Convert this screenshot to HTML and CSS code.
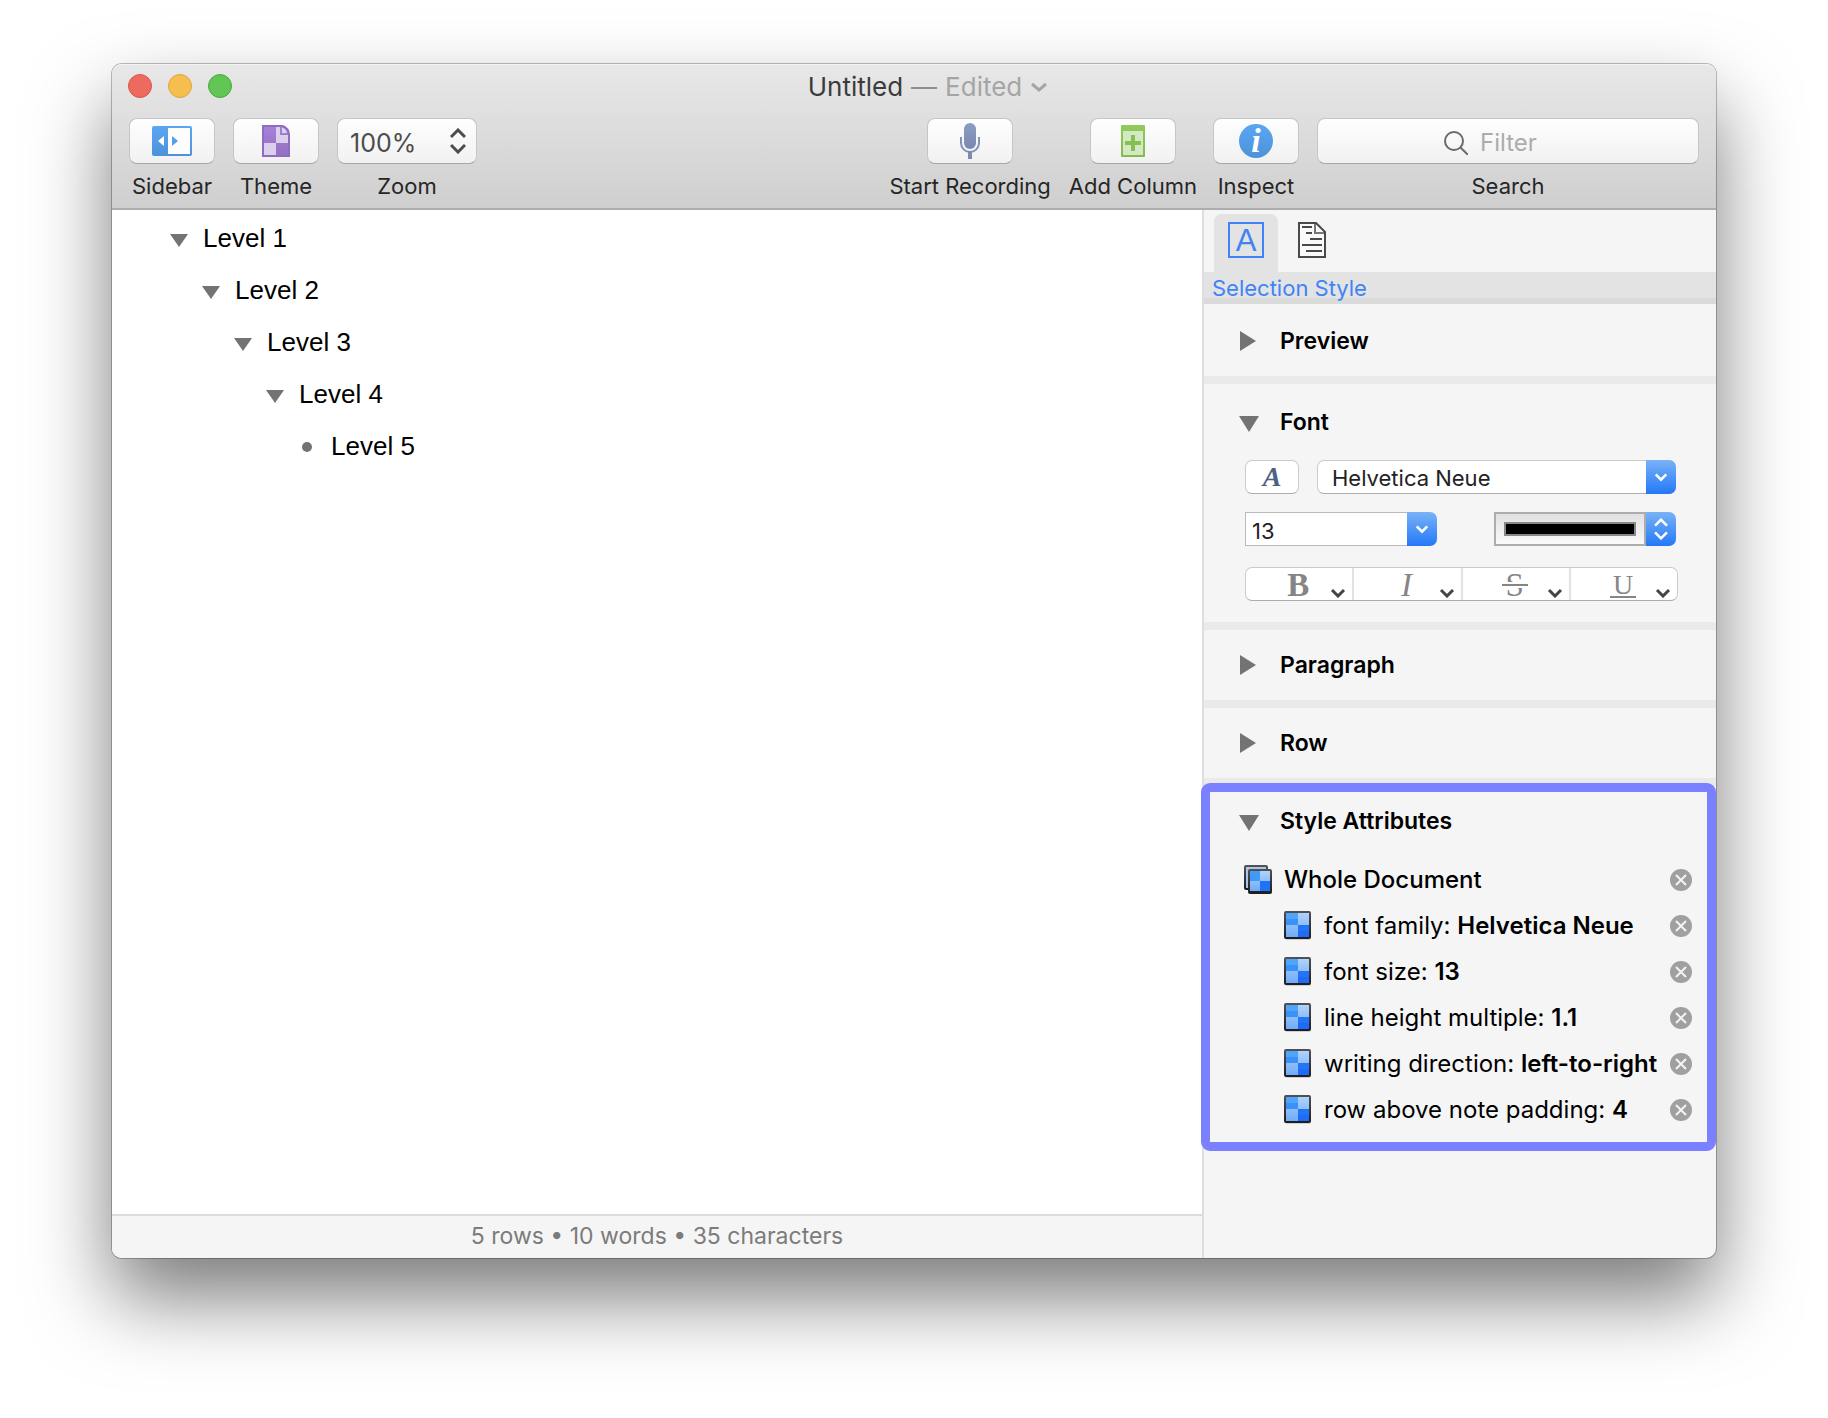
FILE: index.html
```html
<!DOCTYPE html>
<html lang="en">
<head>
<meta charset="utf-8">
<title>Untitled</title>
<link rel="stylesheet" href="styles.css">
</head>
<body>
<svg class="defs" width="0" height="0" aria-hidden="true">
  <defs>
    <linearGradient id="blue" x1="0" y1="0" x2="0" y2="1"><stop offset="0" stop-color="#5ba6f2"/><stop offset="1" stop-color="#4d92da"/></linearGradient>
    <linearGradient id="purple" x1="0" y1="0" x2="0" y2="1"><stop offset="0" stop-color="#a682d8"/><stop offset="1" stop-color="#9370c4"/></linearGradient>
    <linearGradient id="slate" x1="0" y1="0" x2="0" y2="1"><stop offset="0" stop-color="#8b9cc4"/><stop offset="1" stop-color="#7b88b0"/></linearGradient>
    <linearGradient id="green" x1="0" y1="0" x2="0" y2="1"><stop offset="0" stop-color="#90cb5b"/><stop offset="1" stop-color="#83b951"/></linearGradient>
    <linearGradient id="frame" x1="0" y1="0" x2="0" y2="1"><stop offset="0" stop-color="#505256"/><stop offset="1" stop-color="#1c1d20"/></linearGradient>
    <linearGradient id="pale" x1="0" y1="0" x2="0" y2="1"><stop offset="0" stop-color="#b0d2fb"/><stop offset="1" stop-color="#6fabf8"/></linearGradient>
    <symbol id="down" viewBox="0 0 20 20"><path d="M0 4h20L10 20z" fill="#737373"/></symbol>
    <symbol id="down-small" viewBox="0 0 18 18"><path d="M0 5h18L9 18z" fill="#737373"/></symbol>
    <symbol id="right" viewBox="0 0 20 20"><path d="M1 0v20l16-10z" fill="#737373"/></symbol>
    <symbol id="chevron" viewBox="0 0 16 10"><path d="M2 2l6 6 6-6" fill="none" stroke="currentColor" stroke-width="3"/></symbol>
    <symbol id="updown" viewBox="0 0 16 26"><path d="M1 9l7-7 7 7M1 17l7 7 7-7" fill="none" stroke="currentColor" stroke-width="3"/></symbol>
    <symbol id="attr" viewBox="0 0 28 30">
      <rect x="1" y="2" width="26" height="27" rx="2" fill="#000" opacity=".15"/>
      <rect width="27" height="28" rx="2" fill="url(#frame)"/>
      <rect x="2" y="2" width="23" height="24" fill="url(#pale)"/>
      <path d="M2 2h12v12H2z" fill="#3a91f8"/><path d="M14 14h11v12H14z" fill="#2275f7"/>
      <path d="M2 2h12v6H2z" fill="#4fa5f9"/><path d="M14 20h11v6H14z" fill="#1f6bf5"/>
    </symbol>
    <symbol id="docattr" viewBox="0 0 28 30">
      <rect x="1" y="1" width="22" height="23" rx="1" fill="#a9c6ea" stroke="url(#frame)" stroke-width="2"/>
      <rect x="4" y="4" width="24" height="25" rx="2" fill="url(#frame)"/>
      <rect x="6" y="6" width="20" height="20" fill="url(#pale)"/>
      <path d="M6 6h10v10H6z" fill="#429af8"/><path d="M16 16h10v10H16z" fill="#2072f7"/>
    </symbol>
    <symbol id="clear" viewBox="0 0 22 22"><circle cx="11" cy="11" r="11" fill="#a0a0a0"/><path d="M6 6l10 10M16 6L6 16" stroke="#f4f4f4" stroke-width="2"/></symbol>
  </defs>
</svg>

<main class="window">
  <header class="titlebar">
    <div class="titlerow">
      <div class="lights">
        <button class="light red" aria-label="Close"></button>
        <button class="light yellow" aria-label="Minimize"></button>
        <button class="light green" aria-label="Zoom window"></button>
      </div>
      <h1 class="title">Untitled <span class="dash">—</span> <span class="edited">Edited</span> <svg class="title-chevron" width="18" height="10" viewBox="0 0 18 10"><path d="M2 2l7 6 7-6" fill="none" stroke="currentColor" stroke-width="3"/></svg></h1>
    </div>
    <div class="toolbar">
      <div class="tools">
        <div class="tool">
          <button class="key" id="t-sidebar" aria-label="Sidebar">
            <svg width="40" height="30" viewBox="0 0 40 30"><rect width="40" height="30" rx="2" fill="url(#blue)"/><path d="M16 2h22v26H16z" fill="#fdfdfd"/><path d="M12 10v10l-6-5z" fill="#fff"/><path d="M20 10v10l6-5z" fill="#559fe8"/></svg>
          </button>
          <label for="t-sidebar">Sidebar</label>
        </div>
        <div class="tool">
          <button class="key" id="t-theme" aria-label="Theme">
            <svg width="28" height="32" viewBox="0 0 28 32"><path d="M0 0h20q3 0 5 3t3 7v22H0z" fill="url(#purple)"/><path d="M14 2h4v8h8v8H14zM2 18h12v12H2z" fill="#dccfec"/><path d="M20 2q4 1 5 6h-5z" fill="#dccfec"/><path d="M1 1h18.500q7.500 2 7.500 9v21H1z" fill="none" stroke="#8e6cc0" stroke-width="2"/></svg>
          </button>
          <label for="t-theme">Theme</label>
        </div>
        <div class="tool">
          <div class="picker zoom">
            <select id="t-zoom"><option>100%</option><option>150%</option></select>
            <svg class="zoom-mark" width="16" height="26"><use href="#updown"/></svg>
          </div>
          <label for="t-zoom">Zoom</label>
        </div>
      </div>
      <div class="tools end">
        <div class="tool">
          <button class="key" id="t-record" aria-label="Start Recording">
            <svg width="20" height="36" viewBox="0 0 20 36"><rect x="4" width="12" height="26" rx="6" fill="url(#slate)"/><path d="M1 14v6a9 9 0 0 0 18 0v-6" fill="none" stroke="#8392bb" stroke-width="2"/><path d="M8 28h4v8H8z" fill="#7e8bb4"/></svg>
          </button>
          <label for="t-record">Start Recording</label>
        </div>
        <div class="tool">
          <button class="key" id="t-column" aria-label="Add Column">
            <svg width="24" height="32" viewBox="0 0 24 32"><rect width="24" height="32" rx="1" fill="url(#green)"/><path d="M2 6h20v24H2z" fill="#d5e8c4"/><path d="M10 10h4v6h6v4h-6v6h-4v-6H4v-4h6z" fill="#86bf53"/></svg>
          </button>
          <label for="t-column">Add Column</label>
        </div>
      </div>
      <div class="tools">
        <div class="tool">
          <button class="key" id="t-inspect" aria-label="Inspect">
            <svg class="badge" width="34" height="34" viewBox="0 0 34 34"><circle cx="17" cy="17" r="17" fill="url(#blue)"/><text class="info" x="17" y="28" text-anchor="middle">i</text></svg>
          </button>
          <label for="t-inspect">Inspect</label>
        </div>
        <div class="tool">
          <div class="searchbox">
            <svg width="24" height="24" viewBox="0 0 24 24"><circle cx="10" cy="10" r="9" fill="none" stroke="#6a6a6a" stroke-width="2"/><path d="M16 16l8 8" stroke="#6a6a6a" stroke-width="2"/></svg>
            <input id="t-search" type="text" placeholder="Filter">
          </div>
          <label for="t-search">Search</label>
        </div>
      </div>
    </div>
  </header>

  <div class="body">
    <section class="editor">
      <ul class="outline">
        <li><div class="row"><svg width="18" height="18"><use href="#down-small"/></svg>Level 1</div>
          <ul><li><div class="row"><svg width="18" height="18"><use href="#down-small"/></svg>Level 2</div>
            <ul><li><div class="row"><svg width="18" height="18"><use href="#down-small"/></svg>Level 3</div>
              <ul><li><div class="row"><svg width="18" height="18"><use href="#down-small"/></svg>Level 4</div>
                <ul><li><div class="row"><svg width="18" height="18" viewBox="0 0 18 18"><circle cx="9" cy="10" r="5" fill="#737373"/></svg>Level 5</div></li></ul>
              </li></ul>
            </li></ul>
          </li></ul>
        </li>
      </ul>
      <footer class="status">5 rows • 10 words • 35 characters</footer>
    </section>

    <aside class="inspector">
      <nav class="tabs">
        <button class="tab active" aria-label="Style"><span class="letter">A</span></button>
        <button class="tab" aria-label="Document">
          <svg width="28" height="36" viewBox="0 0 28 36"><path d="M1 1h17l9 9v25H1z" fill="#fafafa" stroke="#4a4a4a" stroke-width="2"/><path d="M17 2v9h9" fill="none" stroke="#777" stroke-width="2"/><path d="M4 5h10M8 11h6M12 17h12M4 23h20M8 29h16" stroke="#4a4a4a" stroke-width="2"/></svg>
        </button>
      </nav>
      <div class="band">Selection Style</div>

      <section class="panel first">
        <h2><button class="toggle"><svg width="20" height="20"><use href="#right"/></svg>Preview</button></h2>
      </section>

      <section class="panel font">
        <h2><button class="toggle"><svg width="20" height="20"><use href="#down"/></svg>Font</button></h2>
        <div class="controls">
          <div class="line">
            <button class="fontkey" aria-label="Show fonts">A</button>
            <div class="picker family">
              <select aria-label="Font family"><option>Helvetica Neue</option></select>
              <span class="cap over"><svg width="14" height="10"><use href="#chevron"/></svg></span>
            </div>
          </div>
          <div class="line spread">
            <div class="combo">
              <input type="text" value="13" aria-label="Font size">
              <button class="cap" aria-label="Font sizes"><svg width="14" height="10"><use href="#chevron"/></svg></button>
            </div>
            <div class="combo">
              <button class="well" aria-label="Text color"><span class="swatch"></span></button>
              <button class="cap" aria-label="Colors"><svg width="14" height="22"><use href="#updown"/></svg></button>
            </div>
          </div>
          <div class="segments">
            <button aria-label="Bold"><span class="glyph bold">B</span><svg width="16" height="10"><use href="#chevron"/></svg></button>
            <button aria-label="Italic"><span class="glyph italic">I</span><svg width="16" height="10"><use href="#chevron"/></svg></button>
            <button aria-label="Strikethrough"><span class="glyph strike">S</span><svg width="16" height="10"><use href="#chevron"/></svg></button>
            <button aria-label="Underline"><span class="glyph under">U</span><svg width="16" height="10"><use href="#chevron"/></svg></button>
          </div>
        </div>
      </section>

      <section class="panel">
        <h2><button class="toggle"><svg width="20" height="20"><use href="#right"/></svg>Paragraph</button></h2>
      </section>
      <section class="panel">
        <h2><button class="toggle"><svg width="20" height="20"><use href="#right"/></svg>Row</button></h2>
      </section>

      <section class="attributes">
        <h2><button class="toggle"><svg width="20" height="20"><use href="#down"/></svg>Style Attributes</button></h2>
        <ul class="attrs">
          <li class="whole"><svg width="28" height="30"><use href="#docattr"/></svg><span class="text">Whole Document</span><button aria-label="Clear all"><svg width="22" height="22"><use href="#clear"/></svg></button></li>
          <li><svg width="28" height="30"><use href="#attr"/></svg><span class="text">font family: <b>Helvetica Neue</b></span><button aria-label="Clear"><svg width="22" height="22"><use href="#clear"/></svg></button></li>
          <li><svg width="28" height="30"><use href="#attr"/></svg><span class="text">font size: <b>13</b></span><button aria-label="Clear"><svg width="22" height="22"><use href="#clear"/></svg></button></li>
          <li><svg width="28" height="30"><use href="#attr"/></svg><span class="text">line height multiple: <b>1.1</b></span><button aria-label="Clear"><svg width="22" height="22"><use href="#clear"/></svg></button></li>
          <li><svg width="28" height="30"><use href="#attr"/></svg><span class="text">writing direction: <b>left-to-right</b></span><button aria-label="Clear"><svg width="22" height="22"><use href="#clear"/></svg></button></li>
          <li><svg width="28" height="30"><use href="#attr"/></svg><span class="text">row above note padding: <b>4</b></span><button aria-label="Clear"><svg width="22" height="22"><use href="#clear"/></svg></button></li>
        </ul>
      </section>
    </aside>
  </div>
</main>
</body>
</html>
```

FILE: styles.css
```css
* { box-sizing: border-box; }

body {
  margin: 0;
  min-height: 100vh;
  padding: 64px 112px 160px;
  display: flex;
  flex-direction: column;
  background: #fff;
  color: #000;
  font-family: Inter, Roboto, sans-serif;
  font-size: 22px;
  line-height: 28px;
}

button, input, select {
  font: inherit;
  color: inherit;
  margin: 0;
  padding: 0;
  border: 0;
  background: none;
  outline: 0;
}

select { appearance: none; }
svg { display: block; flex: none; }
h1, h2, ul { margin: 0; padding: 0; font-size: 23px; font-weight: 400; }
ul { list-style: none; }
.defs { position: absolute; }

.window {
  flex: 1;
  display: flex;
  flex-direction: column;
  border-radius: 10px;
  background: #f5f5f5;
  box-shadow: 0 0 0 1px rgba(0, 0, 0, .25), 0 40px 80px rgba(0, 0, 0, .52);
}

/* Title bar and toolbar */
.titlebar {
  height: 146px;
  border-bottom: 2px solid #adadad;
  border-radius: 10px 10px 0 0;
  background: linear-gradient(#e8e8e8, #cfcfcf);
  box-shadow: inset 0 1px #f4f4f4;
}

.titlerow {
  display: grid;
  grid-template-columns: 1fr auto 1fr;
  height: 54px;
  padding: 10px 16px 0;
}

.lights { display: flex; gap: 16px; }
.light { width: 24px; height: 24px; border: 1px solid; border-radius: 50%; }
.red { background: #ee6a5f; border-color: #d75549; }
.yellow { background: #f6be4f; border-color: #dba53c; }
.green { background: #61c654; border-color: #4ba83e; }

.title {
  display: flex;
  align-items: center;
  gap: 8px;
  height: 26px;
  padding-left: 28px;
  font-size: 26px;
  color: #3c3c3c;
}
.dash { color: #8e8e8e; }
.edited, .title-chevron { color: #a5a5a5; }

.toolbar { display: flex; gap: 16px; padding: 0 17px; }
.tools { display: flex; gap: 18px; }
.end { margin-left: auto; }
.tool { display: flex; flex-direction: column; align-items: center; gap: 8px; color: #262626; white-space: nowrap; }

.key, .zoom, .searchbox {
  display: flex;
  align-items: center;
  justify-content: center;
  width: 86px;
  height: 46px;
  border: 1px solid #c6c6c6;
  border-bottom-color: #a6a6a6;
  border-radius: 8px;
  background: linear-gradient(#fefefe, #f1f1f1);
}

.badge { overflow: visible; }
.info { font: italic bold 34px "Liberation Serif", serif; fill: #fff; }

.picker { position: relative; }
.zoom { width: 140px; color: #4c4c4c; }
.zoom select { width: 100%; height: 44px; padding: 3px 0 0 12px; font-size: 25px; }
.zoom-mark { position: absolute; right: 10px; top: 9px; pointer-events: none; }

.searchbox { width: 382px; gap: 12px; padding-top: 3px; }
.searchbox input { width: 92px; font-size: 24px; }
.searchbox input::placeholder { color: #acacac; opacity: 1; }

/* Outline */
.body { flex: 1; display: flex; }
.editor { flex: 1; display: flex; flex-direction: column; background: #fff; border-bottom-left-radius: 10px; }
.outline { flex: 1; padding: 2px 0 0 58px; font: 26px/30px "Liberation Sans", sans-serif; }
.outline ul { padding-left: 32px; font-size: 26px; }
.row { display: flex; align-items: center; gap: 15px; height: 52px; }

.status {
  height: 44px;
  border-top: 2px solid #dcdcdc;
  border-bottom-left-radius: 10px;
  background: #f5f5f5;
  color: #7b7b7b;
  font-size: 23px;
  line-height: 40px;
  text-align: center;
}

/* Inspector */
.inspector { width: 514px; border-left: 2px solid #dedede; }
.tabs { display: flex; gap: 2px; height: 62px; padding: 4px 10px 0; }
.tab { display: flex; justify-content: center; width: 64px; padding-top: 8px; border-radius: 8px 8px 0 0; }
.active { background: #e3e3e3; }
.letter {
  width: 36px;
  height: 36px;
  border: 2px solid #3f83f7;
  color: #3f83f7;
  font: 31px/34px "Liberation Sans", sans-serif;
}
.band {
  height: 32px;
  padding-left: 8px;
  border-bottom: 6px solid #dadada;
  background: #e3e3e3;
  color: #3f83f7;
  line-height: 32px;
}

.panel { border-bottom: 8px solid #eaeaea; }
.toggle { display: flex; align-items: center; gap: 21px; width: 100%; height: 70px; padding: 0 0 0 35px; font-weight: 600; text-align: left; }
.panel h2 { height: 70px; }
.first h2 { height: 72px; }
.first .toggle { height: 74px; }
.font .toggle { height: 76px; }
.font h2 { height: 76px; }
.controls { display: flex; flex-direction: column; gap: 18px; height: 162px; padding: 0 38px 0 41px; }
.line { display: flex; gap: 18px; height: 34px; padding-right: 2px; }
.spread { justify-content: space-between; }

.fontkey, .family, .segments {
  border: 1px solid #cbcbcb;
  border-bottom-color: #adadad;
  border-radius: 7px;
  background: #fff;
}
.fontkey { width: 54px; font: italic bold 28px/32px "Liberation Serif", serif; color: #4c6184; }
.family { flex: 1; }
.family select { width: 100%; height: 34px; padding-left: 14px; color: #222; }

.cap {
  display: flex;
  align-items: center;
  justify-content: center;
  width: 30px;
  height: 34px;
  border-radius: 0 7px 7px 0;
  background: linear-gradient(#79b2f7, #2478f8);
  color: #fff;
}
.over { position: absolute; right: -1px; top: -1px; pointer-events: none; }

.combo { display: flex; }
.combo input { width: 162px; padding: 4px 0 0 6px; border: 1px solid #b9b9b9; border-right: 0; background: #fff; color: #222; }
.well { display: flex; width: 152px; padding: 8px; border: 2px solid #adadad; background: linear-gradient(#e1e1e1, #fafafa); }
.swatch { flex: 1; height: 14px; border: 2px solid #888; background: #000; }

.segments { display: flex; height: 34px; margin-top: 3px; }
.segments button { flex: 1; display: flex; align-items: flex-end; justify-content: flex-end; gap: 19px; padding: 0 6px 2px 0; color: #444; }
.segments button + button { border-left: 2px solid #e2e2e2; }
.glyph { width: 26px; color: #858585; font: 33px/26px "Liberation Serif", serif; text-align: center; }
.bold { font-weight: 700; }
.italic { font-style: italic; }
.strike { position: relative; }
.strike::after {
  content: "";
  position: absolute;
  left: 0;
  right: 0;
  top: 10px;
  height: 2px;
  border: solid #fff;
  border-width: 2px 0;
  background: #858585;
  background-clip: padding-box;
}
.under { font-size: 28px; line-height: 22px; border-bottom: 2px solid #858585; }

.attributes {
  margin: -3px 0 0 -3px;
  border: 9px solid #7a80ff;
  border-radius: 9px;
  background: #f5f5f5;
}
.attributes h2 { height: 65px; }
.attributes .toggle { height: 58px; padding-left: 29px; }
.attrs { padding: 0 15px 9px 0; font-size: 24px; white-space: nowrap; }
.attrs li { display: flex; align-items: center; gap: 12px; height: 46px; padding-left: 74px; }
.attrs .whole { padding-left: 34px; font-weight: 500; }
.attrs b { font-weight: 600; }
.text { flex: 1; }
```
